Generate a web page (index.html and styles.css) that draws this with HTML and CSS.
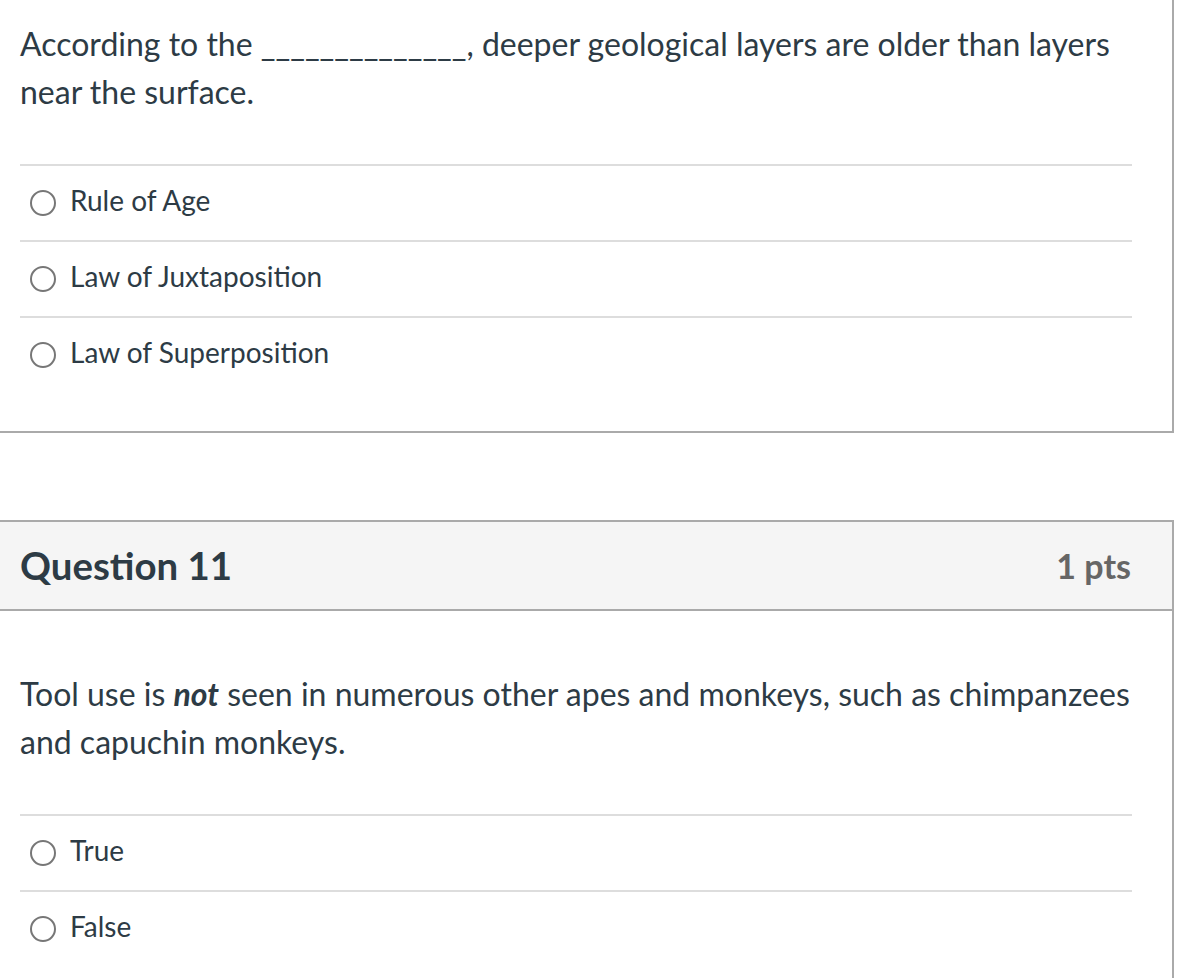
FILE: index.html
```html
<!DOCTYPE html>
<html lang="en">
<head>
<meta charset="utf-8">
<title>Quiz</title>
<link rel="stylesheet" href="styles.css">
</head>
<body>
<div class="quiz">
  <section class="question first">
    <div class="question-body">
      <p class="question-text">According to the ______________, deeper geological layers are older than layers near the surface.</p>
      <ul class="answers">
        <li class="answer"><span class="radio"></span><span class="label">Rule of Age</span></li>
        <li class="answer"><span class="radio"></span><span class="label">Law of Juxtaposition</span></li>
        <li class="answer"><span class="radio"></span><span class="label">Law of Superposition</span></li>
      </ul>
    </div>
  </section>

  <section class="question second">
    <header class="question-header">
      <h2 class="question-title">Question 11</h2>
      <span class="points">1 pts</span>
    </header>
    <div class="question-body">
      <p class="question-text">Tool use is <strong><em>not</em></strong> seen in numerous other apes and monkeys, such as chimpanzees and capuchin monkeys.</p>
      <ul class="answers">
        <li class="answer"><span class="radio"></span><span class="label">True</span></li>
        <li class="answer"><span class="radio"></span><span class="label">False</span></li>
      </ul>
    </div>
  </section>
</div>
</body>
</html>
```

FILE: styles.css
```css
html, body {
  margin: 0;
  padding: 0;
  background: #ffffff;
}

body {
  font-family: Lato, "Open Sans", "Liberation Sans", sans-serif;
  color: #2d3b45;
  overflow: hidden;
  height: 978px;
}

.quiz {
  width: 1174px;
  display: flex;
  flex-direction: column;
  gap: 87px;
}

.question {
  border-right: 2px solid #aaaaaa;
  border-bottom: 2px solid #aaaaaa;
  background: #ffffff;
}

.question.first {
  margin-top: -39px;
}

.question.second {
  border-top: 2px solid #aaaaaa;
}

.question-header {
  display: flex;
  justify-content: space-between;
  align-items: center;
  height: 87px;
  padding: 0 41px 0 20px;
  background: #f5f5f5;
  border-bottom: 2px solid #aaaaaa;
}

.question-title {
  margin: 0;
  font-size: 38.4px;
  font-weight: 700;
  color: #2d3b45;
  line-height: 1;
}

.points {
  font-size: 34px;
  font-weight: 700;
  color: #666666;
  line-height: 1;
}

.question-body {
  padding: 59px 40px 39px 20px;
}

.question-text {
  margin: 0 0 48px 0;
  font-size: 32px;
  line-height: 48px;
}

.answers {
  list-style: none;
  margin: 0;
  padding: 0;
}

.answer {
  display: flex;
  align-items: center;
  gap: 14px;
  height: 74px;
  padding-left: 10px;
  border-top: 2px solid #dddddd;
}

.radio {
  width: 22px;
  height: 22px;
  border: 2px solid #777777;
  border-radius: 50%;
  flex: none;
  box-sizing: content-box;
}

.label {
  font-size: 28px;
  line-height: 1;
  color: #2d3b45;
  padding-bottom: 6px;
}
```
